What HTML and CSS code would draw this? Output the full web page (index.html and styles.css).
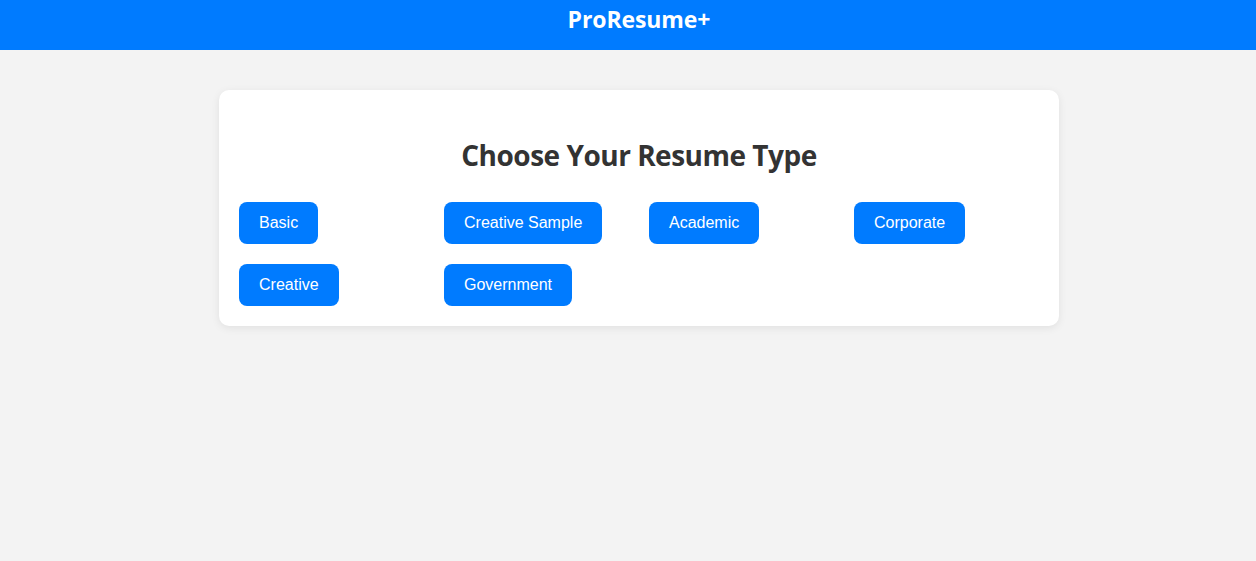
FILE: index.html
```html
<!DOCTYPE html>
<html lang="en">
<head>
<meta charset="utf-8">
<title>ProResume+</title>
<link rel="stylesheet" href="styles.css">
</head>
<body>
<header class="topbar">
  <h1 class="brand">ProResume+</h1>
</header>
<div class="page">
  <main class="card">
    <h2 class="card-title">Choose Your Resume Type</h2>
    <div class="type-grid">
      <div class="cell"><button class="type-btn">Basic</button></div>
      <div class="cell"><button class="type-btn">Creative Sample</button></div>
      <div class="cell"><button class="type-btn">Academic</button></div>
      <div class="cell"><button class="type-btn">Corporate</button></div>
      <div class="cell"><button class="type-btn">Creative</button></div>
      <div class="cell"><button class="type-btn">Government</button></div>
    </div>
  </main>
</div>
</body>
</html>
```

FILE: styles.css
```css
html, body {
  margin: 0;
  padding: 0;
}
body {
  background: #f3f3f3;
  font-family: "Open Sans", "Noto Sans", sans-serif;
  color: #333;
  min-height: 561px;
}
.topbar {
  background: #007bff;
  height: 50px;
  box-sizing: border-box;
  display: flex;
  justify-content: center;
  align-items: flex-start;
  padding: 3px 0 0 22px;
}
.brand {
  margin: 0;
  color: #fff;
  font-size: 23px;
  font-weight: 700;
  line-height: 32px;
  letter-spacing: -0.1px;
}
.page {
  padding-left: 22px;
}
.card {
  display: block;
  width: 840px;
  box-sizing: border-box;
  margin: 40px auto 0;
  background: #fff;
  border-radius: 10px;
  box-shadow: 0 2px 8px rgba(0, 0, 0, 0.08);
  padding: 20px;
}
.card-title {
  margin: 27px 0 29px;
  text-align: center;
  font-size: 28px;
  line-height: 36px;
  font-weight: 700;
  color: #333;
  letter-spacing: -0.5px;
}
.type-grid {
  display: grid;
  grid-template-columns: repeat(4, 1fr);
  gap: 20px;
}
.cell {
  display: flex;
}
.type-btn {
  font-family: "Liberation Sans", Arial, sans-serif;
  font-size: 16px;
  line-height: 18px;
  padding: 12px 20px;
  background: #007bff;
  color: #fff;
  border: none;
  border-radius: 8px;
  cursor: pointer;
}
```
